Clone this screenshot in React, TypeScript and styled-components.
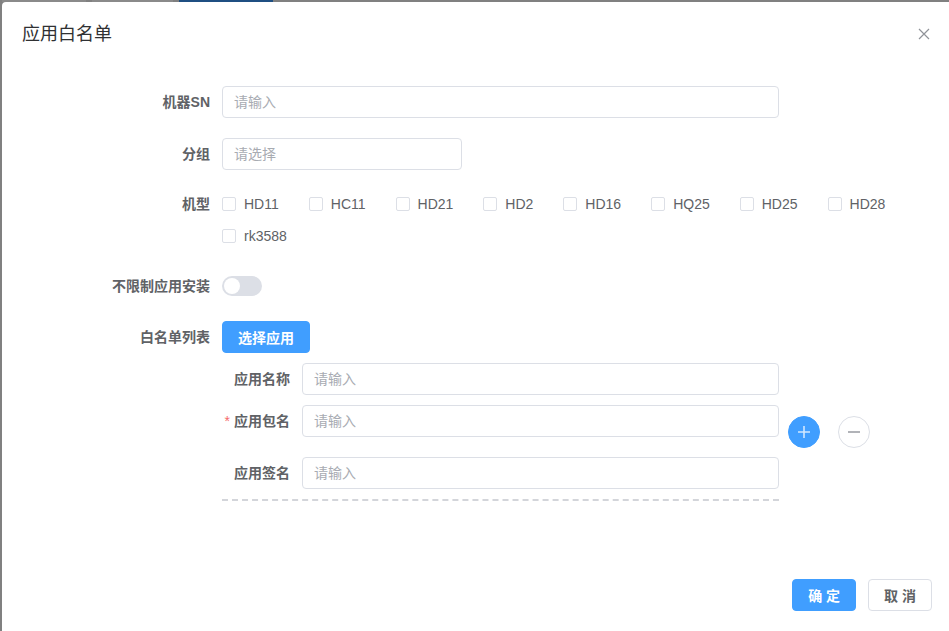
import React from "react";
import styled, { createGlobalStyle } from "styled-components";

const Global = createGlobalStyle`
  html, body { margin: 0; padding: 0; }
  body {
    background: #808080;
    overflow: hidden;
    font-family: "Liberation Sans", "Noto Sans CJK SC", Arial, sans-serif;
    -webkit-font-smoothing: antialiased;
  }
  * { box-sizing: border-box; }
`;

const Page = styled.div`
  width: 949px;
  height: 631px;
  overflow: hidden;
  display: flex;
  flex-direction: column;
`;

const BackStrip = styled.div`
  height: 2px;
  display: flex;
  gap: 6px;
  padding-left: 2px;
  flex-shrink: 0;
`;

const BackTab = styled.div<{ $w: number; $c: string }>`
  width: ${(p) => p.$w}px;
  height: 2px;
  background: ${(p) => p.$c};
`;

const Stage = styled.div`
  padding-left: 2px;
  flex: 1;
`;

const Dialog = styled.div`
  width: 950px;
  min-height: 660px;
  background: #fff;
  border-radius: 4px 0 0 0;
  display: flex;
  flex-direction: column;
`;

const Header = styled.div`
  padding: 20px 20px 10px;
  display: flex;
  align-items: center;
  justify-content: space-between;
`;

const Title = styled.span`
  font-size: 18px;
  line-height: 24px;
  color: #303133;
`;

const CloseBtn = styled.button`
  width: 16px;
  height: 16px;
  padding: 0;
  border: none;
  background: none;
  display: flex;
  align-items: center;
  justify-content: center;
  color: #909399;
`;

const Body = styled.div`
  padding: 30px 20px 0;
`;

const FormItem = styled.div<{ $mb: number }>`
  display: flex;
  align-items: flex-start;
  margin-bottom: ${(p) => p.$mb}px;
`;

const Label = styled.label<{ $w: number; $required?: boolean }>`
  width: ${(p) => p.$w}px;
  flex-shrink: 0;
  padding-right: 12px;
  text-align: right;
  font-size: 14px;
  line-height: 32px;
  height: 32px;
  font-weight: 700;
  color: #606266;
  white-space: nowrap;
  &::before {
    content: ${(p) => (p.$required ? '"*"' : "none")};
    color: #f56c6c;
    margin-right: 4px;
    font-weight: 400;
  }
`;

const Content = styled.div`
  flex: 1;
  min-width: 0;
`;

const Input = styled.input<{ $w: number }>`
  width: ${(p) => p.$w}px;
  height: 32px;
  border: 1px solid #dcdfe6;
  border-radius: 4px;
  padding: 0 11px;
  font-size: 14px;
  font-family: inherit;
  color: #606266;
  outline: none;
  background: #fff;
  display: block;
  &::placeholder {
    color: #a8abb2;
  }
`;

const CheckGroup = styled.div`
  display: flex;
  flex-wrap: wrap;
`;

const CheckItem = styled.label`
  display: inline-flex;
  align-items: center;
  height: 32px;
  margin-right: 30px;
  font-size: 14px;
  color: #606266;
  cursor: pointer;
`;

const CheckBox = styled.span`
  width: 14px;
  height: 14px;
  border: 1px solid #dcdfe6;
  border-radius: 2px;
  background: #fff;
  margin-right: 8px;
  flex-shrink: 0;
`;

const SwitchWrap = styled.div`
  height: 32px;
  display: flex;
  align-items: center;
`;

const SwitchTrack = styled.span`
  width: 40px;
  height: 20px;
  border-radius: 10px;
  background: #dcdfe6;
  display: flex;
  align-items: center;
  padding-left: 2px;
`;

const SwitchKnob = styled.span`
  width: 16px;
  height: 16px;
  border-radius: 50%;
  background: #fff;
`;

const Button = styled.button<{ $primary?: boolean }>`
  height: 32px;
  padding: 0 15px;
  border-radius: 4px;
  font-size: 14px;
  font-family: inherit;
  font-weight: 600;
  border: 1px solid ${(p) => (p.$primary ? "#409eff" : "#dcdfe6")};
  background: ${(p) => (p.$primary ? "#409eff" : "#fff")};
  color: ${(p) => (p.$primary ? "#fff" : "#606266")};
  white-space: pre;
  cursor: pointer;
`;

const AppBlock = styled.div`
  margin-top: 10px;
  display: flex;
  align-items: center;
`;

const AppItems = styled.div`
  width: 557px;
  display: flex;
  flex-direction: column;
`;

const Dashed = styled.div`
  margin-top: 10px;
  border-top: 2px dashed #d3d5da;
`;

const Actions = styled.div`
  margin-left: 9px;
  display: flex;
  gap: 18px;
`;

const CircleBtn = styled.button<{ $primary?: boolean }>`
  width: 32px;
  height: 32px;
  border-radius: 50%;
  padding: 0;
  display: flex;
  align-items: center;
  justify-content: center;
  border: 1px solid ${(p) => (p.$primary ? "#409eff" : "#dcdfe6")};
  background: ${(p) => (p.$primary ? "#409eff" : "#fff")};
  color: ${(p) => (p.$primary ? "#d0e7ff" : "#b1b3b8")};
`;

const Footer = styled.div`
  margin-top: 78px;
  padding: 0 20px;
  display: flex;
  justify-content: flex-end;
  gap: 12px;
`;

const types = ["HD11", "HC11", "HD21", "HD2", "HD16", "HQ25", "HD25", "HD28", "rk3588"];

export default function App() {
  return (
    <>
      <Global />
      <Page>
        <BackStrip>
          <BackTab $w={84} $c="#8a8a8a" />
          <BackTab $w={81} $c="#8a8a8a" />
          <BackTab $w={94} $c="#1f4f82" />
        </BackStrip>
        <Stage>
          <Dialog>
            <Header>
              <Title>应用白名单</Title>
              <CloseBtn aria-label="close">
                <svg width="12" height="12" viewBox="0 0 12 12">
                  <path d="M1 1L11 11M11 1L1 11" stroke="currentColor" strokeWidth="1.2" fill="none" />
                </svg>
              </CloseBtn>
            </Header>
            <Body>
              <FormItem $mb={20}>
                <Label $w={200}>机器SN</Label>
                <Content>
                  <Input $w={557} placeholder="请输入" />
                </Content>
              </FormItem>
              <FormItem $mb={18}>
                <Label $w={200}>分组</Label>
                <Content>
                  <Input $w={240} placeholder="请选择" readOnly />
                </Content>
              </FormItem>
              <FormItem $mb={18}>
                <Label $w={200}>机型</Label>
                <Content>
                  <CheckGroup>
                    {types.map((t) => (
                      <CheckItem key={t}>
                        <CheckBox />
                        {t}
                      </CheckItem>
                    ))}
                  </CheckGroup>
                </Content>
              </FormItem>
              <FormItem $mb={19}>
                <Label $w={200}>不限制应用安装</Label>
                <Content>
                  <SwitchWrap>
                    <SwitchTrack>
                      <SwitchKnob />
                    </SwitchTrack>
                  </SwitchWrap>
                </Content>
              </FormItem>
              <FormItem $mb={0}>
                <Label $w={200}>白名单列表</Label>
                <Content>
                  <Button $primary>选择应用</Button>
                  <AppBlock>
                    <AppItems>
                      <FormItem $mb={10}>
                        <Label $w={80}>应用名称</Label>
                        <Content>
                          <Input $w={477} placeholder="请输入" />
                        </Content>
                      </FormItem>
                      <FormItem $mb={20}>
                        <Label $w={80} $required>
                          应用包名
                        </Label>
                        <Content>
                          <Input $w={477} placeholder="请输入" />
                        </Content>
                      </FormItem>
                      <FormItem $mb={0}>
                        <Label $w={80}>应用签名</Label>
                        <Content>
                          <Input $w={477} placeholder="请输入" />
                        </Content>
                      </FormItem>
                      <Dashed />
                    </AppItems>
                    <Actions>
                      <CircleBtn $primary aria-label="add">
                        <svg width="14" height="14" viewBox="0 0 14 14">
                          <path d="M7 1V13M1 7H13" stroke="currentColor" strokeWidth="1.6" fill="none" />
                        </svg>
                      </CircleBtn>
                      <CircleBtn aria-label="remove">
                        <svg width="14" height="14" viewBox="0 0 14 14">
                          <path d="M1 7H13" stroke="currentColor" strokeWidth="2" fill="none" />
                        </svg>
                      </CircleBtn>
                    </Actions>
                  </AppBlock>
                </Content>
              </FormItem>
            </Body>
            <Footer>
              <Button $primary>确 定</Button>
              <Button>取 消</Button>
            </Footer>
          </Dialog>
        </Stage>
      </Page>
    </>
  );
}
